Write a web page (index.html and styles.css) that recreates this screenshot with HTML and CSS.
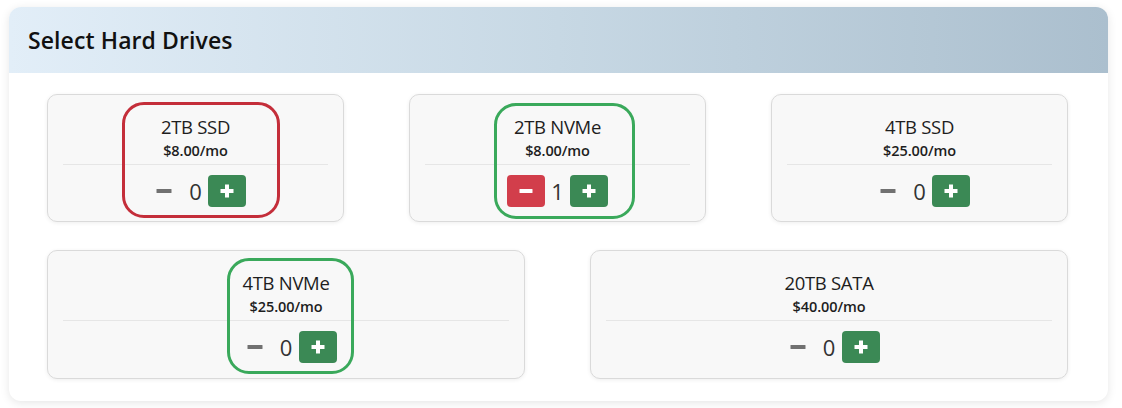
FILE: index.html
```html
<!DOCTYPE html>
<html lang="en">
<head>
<meta charset="utf-8">
<title>Select Hard Drives</title>
<link rel="stylesheet" href="styles.css">
</head>
<body>
<div class="panel">
  <div class="panel-header"><h2 class="panel-title">Select Hard Drives</h2></div>
  <div class="panel-body">
    <div class="row">
      <div class="drive">
        <div class="mark mark-red mark-a"></div>
        <div class="drive-name">2TB SSD</div>
        <div class="drive-price">$8.00/mo</div>
        <div class="divider"></div>
        <div class="controls">
          <button class="btn btn-minus-off"><svg viewBox="0 0 16 16" class="ico"><rect x="0.5" y="6" width="15" height="4" rx="0.6"/></svg></button>
          <span class="qty">0</span>
          <button class="btn btn-plus"><svg viewBox="0 0 16 16" class="ico"><path d="M6 1.5h4v4.5h4.5v4H10v4.5H6V10H1.5V6H6z"/></svg></button>
        </div>
      </div>
      <div class="drive">
        <div class="mark mark-green mark-b"></div>
        <div class="drive-name">2TB NVMe</div>
        <div class="drive-price">$8.00/mo</div>
        <div class="divider"></div>
        <div class="controls">
          <button class="btn btn-minus"><svg viewBox="0 0 16 16" class="ico"><rect x="1.5" y="6" width="13" height="4" rx="0.6"/></svg></button>
          <span class="qty">1</span>
          <button class="btn btn-plus"><svg viewBox="0 0 16 16" class="ico"><path d="M6 1.5h4v4.5h4.5v4H10v4.5H6V10H1.5V6H6z"/></svg></button>
        </div>
      </div>
      <div class="drive">
        <div class="drive-name">4TB SSD</div>
        <div class="drive-price">$25.00/mo</div>
        <div class="divider"></div>
        <div class="controls">
          <button class="btn btn-minus-off"><svg viewBox="0 0 16 16" class="ico"><rect x="0.5" y="6" width="15" height="4" rx="0.6"/></svg></button>
          <span class="qty">0</span>
          <button class="btn btn-plus"><svg viewBox="0 0 16 16" class="ico"><path d="M6 1.5h4v4.5h4.5v4H10v4.5H6V10H1.5V6H6z"/></svg></button>
        </div>
      </div>
    </div>
    <div class="row">
      <div class="drive">
        <div class="mark mark-green mark-c"></div>
        <div class="drive-name">4TB NVMe</div>
        <div class="drive-price">$25.00/mo</div>
        <div class="divider"></div>
        <div class="controls">
          <button class="btn btn-minus-off"><svg viewBox="0 0 16 16" class="ico"><rect x="0.5" y="6" width="15" height="4" rx="0.6"/></svg></button>
          <span class="qty">0</span>
          <button class="btn btn-plus"><svg viewBox="0 0 16 16" class="ico"><path d="M6 1.5h4v4.5h4.5v4H10v4.5H6V10H1.5V6H6z"/></svg></button>
        </div>
      </div>
      <div class="drive">
        <div class="drive-name">20TB SATA</div>
        <div class="drive-price">$40.00/mo</div>
        <div class="divider"></div>
        <div class="controls">
          <button class="btn btn-minus-off"><svg viewBox="0 0 16 16" class="ico"><rect x="0.5" y="6" width="15" height="4" rx="0.6"/></svg></button>
          <span class="qty">0</span>
          <button class="btn btn-plus"><svg viewBox="0 0 16 16" class="ico"><path d="M6 1.5h4v4.5h4.5v4H10v4.5H6V10H1.5V6H6z"/></svg></button>
        </div>
      </div>
    </div>
  </div>
</div>
</body>
</html>
```

FILE: styles.css
```css
* { box-sizing: border-box; }

body {
  margin: 0;
  background: #ffffff;
  font-family: "Open Sans", "Noto Sans", "Liberation Sans", sans-serif;
  color: #212529;
}

.panel {
  margin: 7px 14px 7px 9px;
  border-radius: 12px;
  background: #ffffff;
  box-shadow: 0 2px 10px rgba(0, 0, 0, 0.10);
  overflow: hidden;
}

.panel-header {
  height: 66px;
  display: flex;
  align-items: center;
  padding-left: 19px;
  background: linear-gradient(90deg, #e2eef8 0%, #c7d8e4 50%, #abbfce 100%);
}

.panel-title {
  margin: 0;
  font-size: 23px;
  font-weight: 600;
  color: #111111;
  letter-spacing: 0.1px;
}

.panel-body {
  padding: 21px 40px 22px 38px;
}

.row {
  display: flex;
  gap: 65px;
}

.row + .row {
  margin-top: 28px;
}

.drive {
  position: relative;
  flex: 1 1 0;
  height: 128px;
  padding: 20px 15px 0;
  display: flex;
  flex-direction: column;
  align-items: center;
  background: #f8f8f8;
  border: 1px solid #dadada;
  border-radius: 10px;
  box-shadow: 0 1px 4px rgba(0, 0, 0, 0.07);
}

.row + .row .drive { height: 129px; }

.drive-name {
  font-size: 18.5px;
  line-height: 24px;
  font-weight: 500;
  letter-spacing: -0.3px;
  color: #1e1e1e;
}

.drive-price {
  margin-top: 2px;
  font-size: 14.5px;
  line-height: 20px;
  font-weight: 600;
  letter-spacing: -0.1px;
  color: #1e1e1e;
}

.divider {
  align-self: stretch;
  height: 1px;
  margin-top: 3px;
  background: #e6e6e6;
}

.controls {
  margin-top: 10px;
  display: flex;
  align-items: center;
}

.btn {
  width: 38px;
  height: 32px;
  border: 0;
  border-radius: 4px;
  padding: 0;
  display: flex;
  align-items: center;
  justify-content: center;
  background: transparent;
}

.ico { width: 16px; height: 16px; display: block; }

.btn-plus { background: #3b8955; fill: #ffffff; }
.btn-minus { background: #d23e4b; fill: #ffffff; }
.btn-minus-off { fill: #717171; }

.qty {
  margin: 0 6px;
  min-width: 13px;
  text-align: center;
  font-size: 22px;
  line-height: 32px;
  color: #333333;
}

.mark {
  position: absolute;
  border: 3.5px solid;
  border-radius: 22px;
  pointer-events: none;
}
.mark-red { border-color: #c42e3a; }
.mark-green { border-color: #3aa95b; }
.mark-a { left: 74px; top: 7px; width: 158px; height: 116px; }
.mark-b { left: 84px; top: 8px; width: 141px; height: 116px; }
.mark-c { left: 179px; top: 7px; width: 127px; height: 116px; }
```
